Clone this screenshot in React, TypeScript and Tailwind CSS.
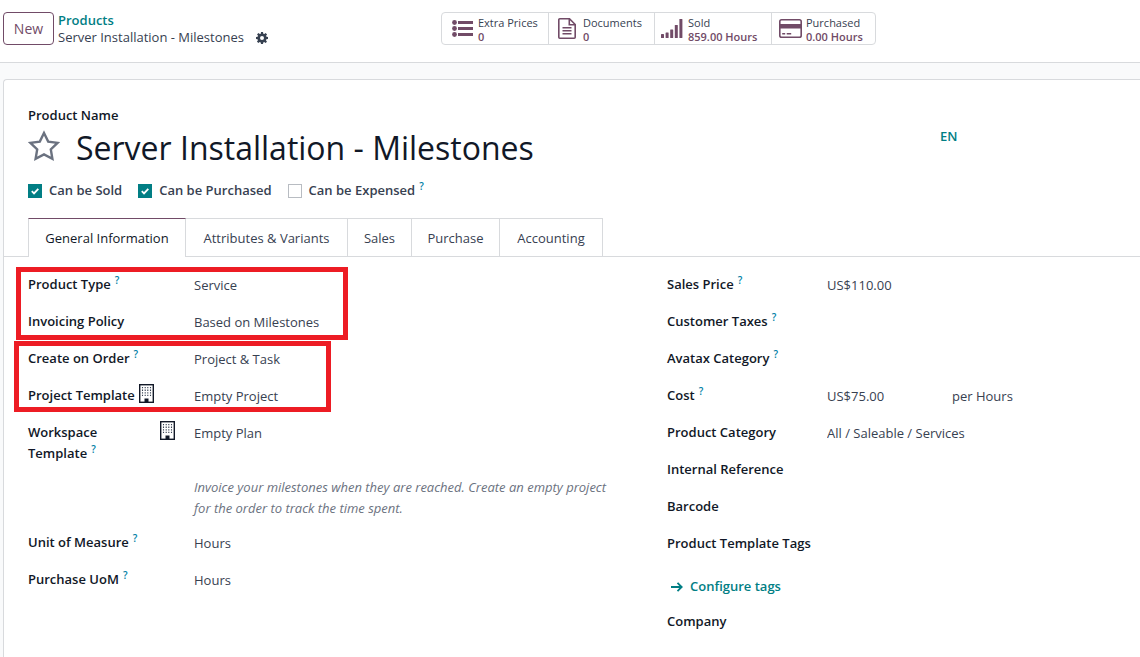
import type { ReactNode } from "react";

function Help() {
  return <sup className="relative -top-[5px] ml-1 align-baseline text-[10px] leading-none font-semibold text-[#0180a5]">?</sup>;
}

function GearIcon() {
  return (
    <svg viewBox="0 0 24 24" className="h-3 w-3" fill="#374151" aria-hidden="true">
      <path
        fillRule="evenodd"
        d="M10 0h4l.6 3.3 2 .9L19.4 2.200l2.700 2.700-2 2.800.9 2L24 10v4l-3.200.6-.9 2 2 2.800-2.700 2.700-2.700-2-2 .9L14 24h-4l-.6-3.200-2-.9-2.800 2-2.700-2.700 2-2.800-.9-2L0 14v-4l3.200-.5.9-2-2-2.700 2.700-2.700 2.800 2 2-.8zM12 8a4 4 0 1 0 0 8 4 4 0 0 0 0-8z"
      />
    </svg>
  );
}

function ListIcon() {
  return (
    <svg viewBox="0 0 21 17" className="h-[17px] w-[21px]" fill="#714B67" aria-hidden="true">
      <circle cx="2.500" cy="2.500" r="2.400" />
      <circle cx="2.500" cy="8.500" r="2.400" />
      <circle cx="2.500" cy="14.500" r="2.400" />
      <path d="M6 1h15v3H6zM6 7h15v3H6zM6 13h15v3H6z" />
    </svg>
  );
}

function DocumentIcon() {
  return (
    <svg viewBox="0 0 18 21" className="h-[21px] w-[18px]" fill="none" stroke="#714B67" strokeWidth="1.600" aria-hidden="true">
      <path d="M1.800.8h9.700l5.700 5.700v12.700a1 1 0 0 1-1 1H1.800a1 1 0 0 1-1-1V1.800a1 1 0 0 1 1-1zM11.300 1v5.700H17" />
      <path d="M4.500 9.700h9M4.500 12.700h9M4.500 15.700h9" />
    </svg>
  );
}

function SignalIcon() {
  return (
    <svg viewBox="0 0 22 19" className="h-[19px] w-[22px]" fill="#714B67" aria-hidden="true">
      <rect x="0" y="15" width="3" height="4" rx=".5" />
      <rect x="4.600" y="13.500" width="3" height="5.500" rx=".5" />
      <rect x="9.200" y="10.500" width="3" height="8.500" rx=".5" />
      <rect x="13.800" y="6" width="3" height="13" rx=".5" />
      <rect x="18.400" y="0" width="3" height="19" rx=".5" />
    </svg>
  );
}

function CardIcon() {
  return (
    <svg viewBox="0 0 23 19" className="h-[19px] w-[23px]" aria-hidden="true">
      <rect x=".8" y=".8" width="21.400" height="17.400" rx="1.800" fill="none" stroke="#714B67" strokeWidth="1.600" />
      <path d="M1 5h21v4.500H1zM3.200 14h3v1.500h-3zM7.700 14h4.500v1.500H7.700z" fill="#714B67" />
    </svg>
  );
}

function StarIcon() {
  return (
    <svg viewBox="0 0 32 31" className="h-[31px] w-8" fill="none" stroke="#6b7280" strokeWidth="2.400" strokeLinejoin="miter" aria-hidden="true">
      <path d="M16 3l4.200 8.600 9.400 1.300-6.800 6.600 1.600 9.300L16 24.400l-8.400 4.400 1.600-9.300-6.800-6.600 9.400-1.300z" />
    </svg>
  );
}

function BuildingIcon() {
  return (
    <svg viewBox="0 0 15 19" className="-mt-px h-[19px] w-[15px] shrink-0" aria-hidden="true">
      <rect x=".7" y=".7" width="13.600" height="17.600" fill="none" stroke="#111827" strokeWidth="1.400" />
      <path d="M3.500 3v10.500M6.200 3v10.500M8.800 3v10.500M11.500 3v10.500" stroke="#374151" strokeWidth="1.100" strokeDasharray="1.300 1.300" fill="none" />
      <path d="M5.500 14.500h4V18h-4z" fill="#111827" />
    </svg>
  );
}

function ArrowIcon() {
  return (
    <svg viewBox="0 0 12 10" className="h-[10px] w-3" fill="none" stroke="#017E84" strokeWidth="1.800" aria-hidden="true">
      <path d="M0 5h10.500M6.500 .8L10.700 5 6.500 9.200" />
    </svg>
  );
}

function Stat({ icon, label, value, size }: { icon: ReactNode; label: string; value: string; size: string }) {
  return (
    <button type="button" className={`flex items-center border-r border-[#d8dadd] text-left last:border-r-0 ${size}`}>
      <span className="flex w-6 shrink-0 justify-center">{icon}</span>
      <span className="pt-[2px] leading-[14px] whitespace-nowrap text-[#374151]">
        <span className="block text-[11px]">{label}</span>
        <span className="block text-[11px] font-semibold text-[#714B67]">{value}</span>
      </span>
    </button>
  );
}

function Check({ label, checked, help }: { label: string; checked?: boolean; help?: boolean }) {
  return (
    <label className="flex items-center gap-[7px]">
      <span className="grid h-[14px] w-[14px] place-items-center">
        <input
          type="checkbox"
          defaultChecked={checked}
          className="peer col-start-1 row-start-1 h-[14px] w-[14px] appearance-none border border-[#b8bcc2] checked:border-[#017E84] checked:bg-[#017E84]"
        />
        <svg viewBox="0 0 14 14" className="pointer-events-none col-start-1 row-start-1 hidden h-[14px] w-[14px] peer-checked:block" fill="none" stroke="#fff" strokeWidth="1.800" aria-hidden="true">
          <path d="M3.800 7.200l2.200 2.200 4.300-4.600" />
        </svg>
      </span>
      <span className="whitespace-nowrap">
        {label}
        {help && <Help />}
      </span>
    </label>
  );
}

type FieldProps = { id: string; label: string; value?: string; help?: boolean; icon?: "inline" | "end"; suffix?: string; wide?: boolean };

function Field({ id, label, value = "", help, icon, suffix, wide }: FieldProps) {
  return (
    <div className={`grid py-2 leading-[21px] ${wide ? "grid-cols-[160px_1fr]" : "grid-cols-[166px_1fr]"}`}>
      <div className={`flex items-start ${icon === "end" ? "justify-between pr-[19px]" : "gap-1"}`}>
        <label htmlFor={id} className={`font-semibold text-[#111827] ${icon === "end" ? "w-24" : "whitespace-nowrap"}`}>
          {label}
          {help && <Help />}
        </label>
        {icon && <BuildingIcon />}
      </div>
      <div className="flex pt-px">
        <input id={id} defaultValue={value} className={`h-5 min-w-0 bg-transparent outline-none ${suffix ? "w-[125px]" : "w-full"}`} />
        {suffix && <span className="h-5 leading-5 whitespace-nowrap">{suffix}</span>}
      </div>
    </div>
  );
}

const tabs = [
  { label: "General Information", size: "w-[158px]" },
  { label: "Attributes & Variants", size: "w-[162px]" },
  { label: "Sales", size: "w-16" },
  { label: "Purchase", size: "w-[88px]" },
  { label: "Accounting", size: "w-[103px]" },
];

export default function App() {
  return (
    <div className="flex min-h-screen flex-col overflow-x-hidden bg-[#f9fafb] font-['Open_Sans','Noto_Sans',sans-serif] text-[13px] text-[#374151]">
      <header className="grid grid-cols-[438fr_699fr] border-b border-[#d8dadd] bg-white pt-3 pb-4 pl-[3px]">
        <div className="flex gap-1">
          <button type="button" className="h-[33px] w-[51px] rounded border border-[#714B67] text-sm font-medium text-[#714B67]">
            New
          </button>
          <nav className="leading-[17px] whitespace-nowrap">
            <a href="#products" className="block font-semibold text-[#017E84]">
              Products
            </a>
            <div className="flex items-center gap-3">
              <span>Server Installation - Milestones</span>
              <button type="button" aria-label="Actions">
                <GearIcon />
              </button>
            </div>
          </nav>
        </div>
        <div className="flex h-[33px] w-[435px] rounded border border-[#d8dadd]">
          <Stat icon={<ListIcon />} label="Extra Prices" value="0" size="w-[107px] gap-1 pl-2" />
          <Stat icon={<DocumentIcon />} label="Documents" value="0" size="w-[106px] gap-1 pl-[6px]" />
          <Stat icon={<SignalIcon />} label="Sold" value="859.00 Hours" size="w-[117px] gap-1 pl-[5px]" />
          <Stat icon={<CardIcon />} label="Purchased" value="0.00 Hours" size="flex-1 gap-1 pl-[6px]" />
        </div>
      </header>

      <main className="mt-4 ml-[3px] flex-1 rounded-tl border-t border-l border-[#d8dadd] bg-white pt-[25px] pb-6">
        <section className="px-6">
          <label htmlFor="name" className="block leading-[21px] font-semibold text-[#111827]">
            Product Name
          </label>
          <div className="grid grid-cols-[912fr_176fr]">
            <div className="flex gap-4">
              <button type="button" aria-label="Favorite" className="h-11 pb-1.5">
                <StarIcon />
              </button>
              <input id="name" defaultValue="Server Installation - Milestones" className="h-11 min-w-0 flex-1 bg-transparent text-[32px] text-[#111827] outline-none" />
            </div>
            <button type="button" className="h-[22px] justify-self-start font-semibold text-[#017E84]">
              EN
            </button>
          </div>
          <div className="mt-[10px] flex gap-4 leading-[21px] font-semibold">
            <Check label="Can be Sold" checked />
            <Check label="Can be Purchased" checked />
            <Check label="Can be Expensed" help />
          </div>
        </section>

        <div role="tablist" className="mt-[17px] flex border-b border-[#d8dadd] pl-6">
          {tabs.map((tab, i) => (
            <button
              key={tab.label}
              type="button"
              role="tab"
              aria-selected={i === 0}
              className={`border-t border-r border-r-[#d8dadd] pt-[2px] whitespace-nowrap ${tab.size} ${
                i === 0 ? "-mb-px h-[39px] border-l border-t-[#714B67] border-l-[#d8dadd] bg-white text-[#111827]" : "h-[38px] border-t-[#d8dadd]"
              }`}
            >
              {tab.label}
            </button>
          ))}
        </div>

        <section className="grid grid-cols-[607fr_449fr] gap-x-8 px-6 pt-[9px]">
          <div>
            <div className="relative">
              <Field id="type" label="Product Type" value="Service" help />
              <Field id="policy" label="Invoicing Policy" value="Based on Milestones" />
              <div className="pointer-events-none absolute top-px -left-3 h-[73px] w-[332px] border-[5px] border-[#ed1c24]" />
            </div>
            <div className="relative">
              <Field id="create" label="Create on Order" value="Project & Task" help />
              <Field id="project" label="Project Template" value="Empty Project" icon="inline" />
              <div className="pointer-events-none absolute top-px -left-[14px] h-[71px] w-[317px] border-[5px] border-[#ed1c24]" />
            </div>
            <Field id="workspace" label="Workspace Template" value="Empty Plan" help icon="end" />
            <p className="py-[5px] pr-4 pl-[166px] leading-[21px] text-[#6b7280] italic">
              Invoice your milestones when they are reached. Create an empty project for the order to track the time spent.
            </p>
            <Field id="uom" label="Unit of Measure" value="Hours" help />
            <Field id="puom" label="Purchase UoM" value="Hours" help />
          </div>
          <div>
            <Field wide id="price" label="Sales Price" value="US$110.00" help />
            <Field wide id="taxes" label="Customer Taxes" help />
            <Field wide id="avatax" label="Avatax Category" help />
            <Field wide id="cost" label="Cost" value="US$75.00" suffix="per Hours" help />
            <Field wide id="category" label="Product Category" value="All / Saleable / Services" />
            <Field wide id="reference" label="Internal Reference" />
            <Field wide id="barcode" label="Barcode" />
            <Field wide id="tags" label="Product Template Tags" />
            <a href="#tags" className="flex items-center gap-[7px] pt-[14px] pb-[6px] pl-1 leading-[21px] font-semibold text-[#017E84]">
              <ArrowIcon />
              Configure tags
            </a>
            <Field wide id="company" label="Company" />
          </div>
        </section>
      </main>
    </div>
  );
}
